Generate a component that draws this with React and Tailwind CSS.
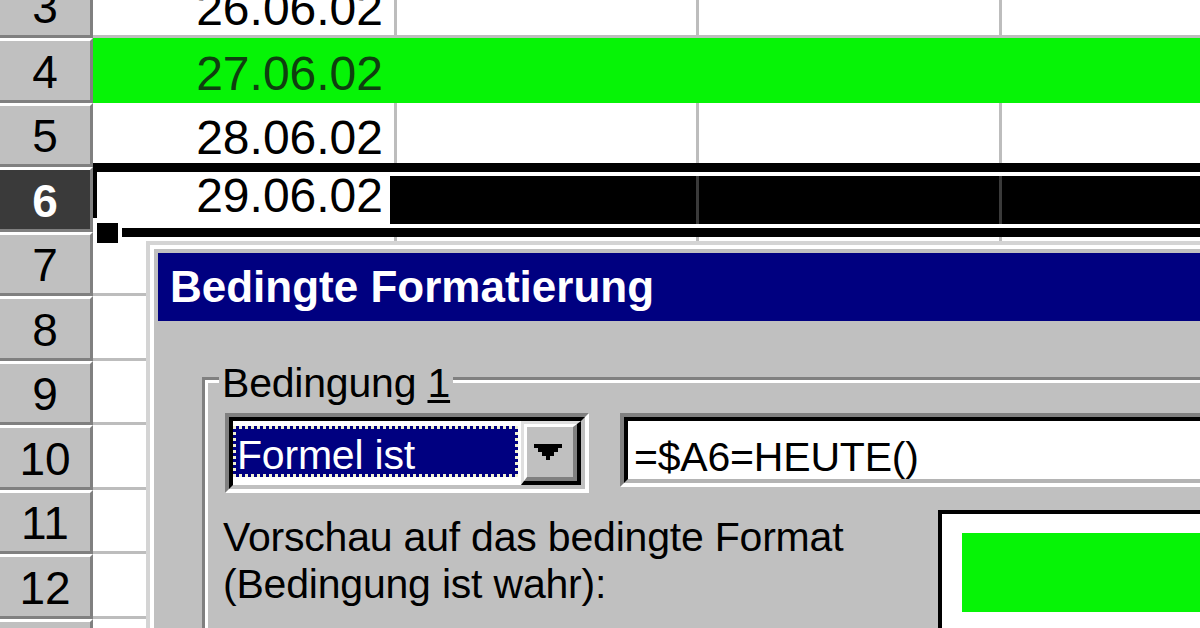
import React from "react";

const rows = [
  { n: 3, h: 64, date: "26.06.02" },
  { n: 4, h: 65, date: "27.06.02", green: true },
  { n: 5, h: 64, date: "28.06.02" },
  { n: 6, h: 65, date: "29.06.02", selected: true },
  { n: 7, h: 64 },
  { n: 8, h: 65 },
  { n: 9, h: 64 },
  { n: 10, h: 65 },
  { n: 11, h: 64 },
  { n: 12, h: 65 },
  { n: 13, h: 64 },
];

const RowHeader = ({ n, selected }) => (
  <div
    className={`w-[93px] shrink-0 h-full flex items-center justify-center pt-[2px] text-[46px] leading-none border-t-[3px] border-b-[3px] border-r-[3px] border-t-white border-b-[#808080] border-r-[#808080] ${
      selected ? "bg-[#3a3a3a] text-white font-bold" : "bg-[#c0c0c0] text-black"
    }`}
  >
    {n}
  </div>
);

const Cells = ({ date, green, selected }) => {
  if (green) {
    return (
      <div className="flex-1 flex bg-[#06f406]">
        <div className="w-[304px] flex items-end justify-end pr-[14px] pb-[5px] text-[#0f3f0f]">
          {date}
        </div>
      </div>
    );
  }

  if (selected) {
    return (
      <div className="flex-1 flex">
        <div className="w-[297px] bg-white flex items-end justify-end pr-[7px] pb-[12px]">
          {date}
        </div>
        <div className="flex-1 flex bg-black">
          <div className="w-[309px] border-r-[3px] border-r-[#3a3a3a]" />
          <div className="w-[303px] border-r-[3px] border-r-[#3a3a3a]" />
        </div>
      </div>
    );
  }

  return (
    <div className="flex-1 flex bg-white">
      <div className="w-[304px] flex items-end justify-end pr-[11px] pb-[2px] border-r-[3px] border-b-[3px] border-r-[#bdbdbd] border-b-[#bdbdbd]">
        {date}
      </div>
      <div className="w-[302px] border-r-[3px] border-b-[3px] border-r-[#bdbdbd] border-b-[#bdbdbd]" />
      <div className="w-[303px] border-r-[3px] border-b-[3px] border-r-[#bdbdbd] border-b-[#bdbdbd]" />
      <div className="flex-1 border-b-[3px] border-b-[#bdbdbd]" />
    </div>
  );
};

const Row = (row) => (
  <div className={`flex ${row.h === 65 ? "h-[65px]" : "h-[64px]"} text-[48px] leading-none`}>
    <RowHeader n={row.n} selected={row.selected} />
    <Cells {...row} />
  </div>
);

const DropArrow = () => (
  <svg width="28" height="16" viewBox="0 0 7 4" shapeRendering="crispEdges">
    <path d="M0 0H7V1H6V2H5V3H4V4H3V3H2V2H1V1H0Z" fill="#000" />
  </svg>
);

const Dialog = () => (
  <div className="absolute left-[146px] top-[241px] w-[1120px] h-[420px] bg-[#c0c0c0] border-t-[4px] border-l-[4px] border-t-[#d4d4d4] border-l-[#d4d4d4]">
    <div className="h-full flex flex-col border-t-[4px] border-l-[4px] border-t-white border-l-white p-[4px]">
      <div className="h-[68px] shrink-0 bg-[#000080] flex items-center pl-[12px] text-white font-bold text-[44px] leading-none">
        Bedingte Formatierung
      </div>

      <div className="pt-[56px] pl-[44px] flex-1">
        <div className="relative border-t-[3px] border-l-[3px] border-t-[#808080] border-l-[#808080]">
          <div className="h-[400px] border-t-[3px] border-l-[3px] border-t-white border-l-white pt-[30px] pl-[17px] text-[41px] leading-none tracking-[-0.2px] text-black">
            <div className="flex items-start">
              {/* combo box */}
              <div className="w-[364px] h-[80px] shrink-0 border-[4px] border-t-[#808080] border-l-[#808080] border-b-white border-r-white">
                <div className="h-full flex bg-white border-[4px] border-t-black border-l-black border-b-[#c0c0c0] border-r-[#c0c0c0]">
                  <div className="w-[285px] pt-[5px]">
                    <div className="h-[51px] bg-[#000080] border-[3px] border-dotted border-[#f0f0d0] text-white pl-[1px] pt-[6px]">
                      Formel ist
                    </div>
                  </div>
                  <div className="ml-[3px] w-[60px] h-full border-t-[3px] border-l-[3px] border-r-[4px] border-b-[4px] border-t-[#dfdfdf] border-l-[#dfdfdf] border-r-black border-b-black">
                    <div className="h-full bg-[#c0c0c0] flex items-center justify-center pr-[4px] border-t-[3px] border-l-[3px] border-r-[4px] border-b-[4px] border-t-white border-l-white border-r-[#808080] border-b-[#808080]">
                      <DropArrow />
                    </div>
                  </div>
                </div>
              </div>

              {/* formula field */}
              <div className="ml-[31px] flex-1 h-[74px] border-t-[4px] border-l-[4px] border-b-[4px] border-t-[#808080] border-l-[#808080] border-b-white">
                <div className="h-full bg-white border-t-[4px] border-l-[4px] border-b-[4px] border-t-black border-l-black border-b-[#b4b4b4] pl-[6px] pt-[16px]">
                  =$A6=HEUTE()
                </div>
              </div>
            </div>

            <div className="mt-[17px] -ml-[2px] flex items-start">
              <div className="w-[715px] shrink-0 pt-[4px] leading-[47px]">
                Vorschau auf das bedingte Format
                <br />
                (Bedingung ist wahr):
              </div>
              <div className="flex-1 h-[200px] bg-white border-t-[4px] border-l-[4px] border-t-black border-l-black pt-[19px] pl-[20px]">
                <div className="h-[79px] bg-[#06f406]" />
              </div>
            </div>
          </div>

          <div className="absolute -top-[17px] left-[14px] bg-[#c0c0c0] px-[3px] text-[41px] leading-none tracking-[-0.2px] text-black">
            Bedingung{" "}
            <span className="underline decoration-[3px] underline-offset-[3px]">1</span>
          </div>
        </div>
      </div>
    </div>
  </div>
);

export default function App() {
  return (
    <div className="relative w-[1200px] h-[628px] overflow-hidden bg-white font-['Liberation_Sans',Arial,sans-serif] text-black">
      <div className="flex flex-col -mt-[26px]">
        {rows.map((row) => (
          <Row key={row.n} {...row} />
        ))}
      </div>

      {/* selection frame around row 6 */}
      <div className="absolute left-[93px] top-[163px] right-0 h-[74px] flex flex-col">
        <div className="h-[9px] bg-black" />
        <div className="h-[56px] flex">
          <div className="w-[4px] h-[46px] bg-black" />
          <div className="flex-1 flex flex-col justify-between">
            <div className="h-[4px] bg-white" />
            <div className="h-[4px] bg-white" />
          </div>
        </div>
        <div className="h-[9px] flex">
          <div className="w-[29px]" />
          <div className="flex-1 bg-black" />
        </div>
      </div>
      <div className="absolute left-[97px] top-[223px] w-[21px] h-[20px] bg-black" />

      <Dialog />
    </div>
  );
}
